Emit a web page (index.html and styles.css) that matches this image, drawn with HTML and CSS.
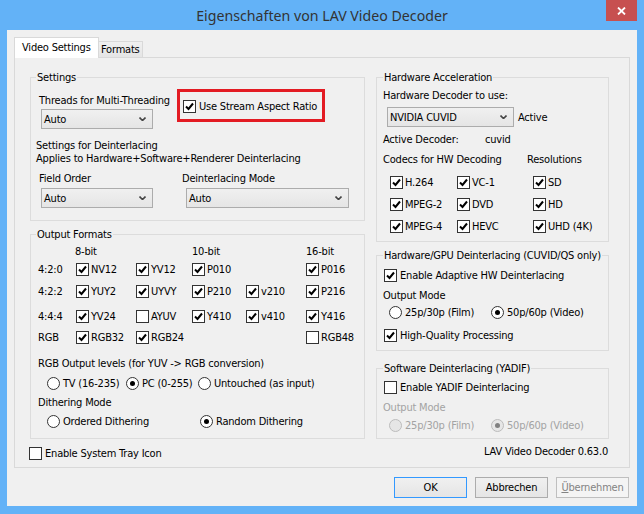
FILE: index.html
```html
<!DOCTYPE html>
<html lang="de">
<head>
    <meta charset="UTF-8">
    <title>Eigenschaften von LAV Video Decoder</title>
    <link rel="stylesheet" href="styles.css">
</head>
<body>
    <div class="window">
        <div class="titlebar">
            <div class="title">Eigenschaften von LAV Video Decoder</div>
            <div class="close">
                <svg width="9" height="8" viewBox="0 0 9 8"><path d="M1 0.5L8 7.5M8 0.5L1 7.5"/></svg>
            </div>
        </div>

        <div class="client">
            <div class="tabs">
                <div class="tab active">Video Settings</div>
                <div class="tab formats">Formats</div>
            </div>

            <div class="page">
                <!-- left column -->
                <div class="col left">
                    <fieldset class="settings">
                        <legend>Settings</legend>
                        <div class="row-a">
                            <div class="threads">
                                <div class="lbl">Threads for Multi-Threading</div>
                                <div class="combo w112"><span>Auto</span><svg class="arrow" viewBox="0 0 7 4"><path d="M0.5 0.5L3.5 3.5L6.5 0.5"/></svg></div>
                            </div>
                            <div class="aspect">
                                <span class="chk"><span class="box"><svg class="tick" viewBox="0 0 11 11"><path d="M2 5.5L4.5 8L9 2.5"/></svg></span>Use Stream Aspect Ratio</span>
                            </div>
                        </div>
                        <div class="deint-title">Settings for Deinterlacing<br>Applies to Hardware+Software+Renderer Deinterlacing</div>
                        <div class="row-c">
                            <div class="field-order">
                                <div class="lbl">Field Order</div>
                                <div class="combo w112"><span>Auto</span><svg class="arrow" viewBox="0 0 7 4"><path d="M0.5 0.5L3.5 3.5L6.5 0.5"/></svg></div>
                            </div>
                            <div class="deint-mode">
                                <div>Deinterlacing Mode</div>
                                <div class="combo w163"><span>Auto</span><svg class="arrow" viewBox="0 0 7 4"><path d="M0.5 0.5L3.5 3.5L6.5 0.5"/></svg></div>
                            </div>
                        </div>
                    </fieldset>

                    <fieldset class="output">
                        <legend>Output Formats</legend>
                        <div class="fmt-grid">
                            <span></span><span class="hdr">8-bit</span><span></span><span>10-bit</span><span></span><span>16-bit</span>

                            <span>4:2:0</span>
                            <span class="chk tight"><span class="box"><svg class="tick" viewBox="0 0 11 11"><path d="M2 5.5L4.5 8L9 2.5"/></svg></span>NV12</span>
                            <span class="chk tight"><span class="box"><svg class="tick" viewBox="0 0 11 11"><path d="M2 5.5L4.5 8L9 2.5"/></svg></span>YV12</span>
                            <span class="chk tight"><span class="box"><svg class="tick" viewBox="0 0 11 11"><path d="M2 5.5L4.5 8L9 2.5"/></svg></span>P010</span>
                            <span></span>
                            <span class="chk tight"><span class="box"><svg class="tick" viewBox="0 0 11 11"><path d="M2 5.5L4.5 8L9 2.5"/></svg></span>P016</span>

                            <span>4:2:2</span>
                            <span class="chk tight"><span class="box"><svg class="tick" viewBox="0 0 11 11"><path d="M2 5.5L4.5 8L9 2.5"/></svg></span>YUY2</span>
                            <span class="chk tight"><span class="box"><svg class="tick" viewBox="0 0 11 11"><path d="M2 5.5L4.5 8L9 2.5"/></svg></span>UYVY</span>
                            <span class="chk tight"><span class="box"><svg class="tick" viewBox="0 0 11 11"><path d="M2 5.5L4.5 8L9 2.5"/></svg></span>P210</span>
                            <span class="chk tight"><span class="box"><svg class="tick" viewBox="0 0 11 11"><path d="M2 5.5L4.5 8L9 2.5"/></svg></span>v210</span>
                            <span class="chk tight"><span class="box"><svg class="tick" viewBox="0 0 11 11"><path d="M2 5.5L4.5 8L9 2.5"/></svg></span>P216</span>

                            <span>4:4:4</span>
                            <span class="chk tight"><span class="box"><svg class="tick" viewBox="0 0 11 11"><path d="M2 5.5L4.5 8L9 2.5"/></svg></span>YV24</span>
                            <span class="chk tight"><span class="box"></span>AYUV</span>
                            <span class="chk tight"><span class="box"><svg class="tick" viewBox="0 0 11 11"><path d="M2 5.5L4.5 8L9 2.5"/></svg></span>Y410</span>
                            <span class="chk tight"><span class="box"><svg class="tick" viewBox="0 0 11 11"><path d="M2 5.5L4.5 8L9 2.5"/></svg></span>v410</span>
                            <span class="chk tight"><span class="box"><svg class="tick" viewBox="0 0 11 11"><path d="M2 5.5L4.5 8L9 2.5"/></svg></span>Y416</span>

                            <span>RGB</span>
                            <span class="chk tight"><span class="box"><svg class="tick" viewBox="0 0 11 11"><path d="M2 5.5L4.5 8L9 2.5"/></svg></span>RGB32</span>
                            <span class="chk tight"><span class="box"><svg class="tick" viewBox="0 0 11 11"><path d="M2 5.5L4.5 8L9 2.5"/></svg></span>RGB24</span>
                            <span></span>
                            <span></span>
                            <span class="chk tight"><span class="box"></span>RGB48</span>
                        </div>

                        <div class="levels-label">RGB Output levels (for YUV -&gt; RGB conversion)</div>
                        <div class="radios levels">
                            <span class="radio w79"><span class="dot"></span>TV (16-235)</span>
                            <span class="radio w72"><span class="dot on"></span>PC (0-255)</span>
                            <span class="radio"><span class="dot"></span>Untouched (as input)</span>
                        </div>
                        <div class="dither-label">Dithering Mode</div>
                        <div class="radios dither">
                            <span class="radio w153"><span class="dot"></span>Ordered Dithering</span>
                            <span class="radio"><span class="dot on"></span>Random Dithering</span>
                        </div>
                    </fieldset>

                    <div class="tray">
                        <span class="chk"><span class="box"></span>Enable System Tray Icon</span>
                    </div>
                </div>

                <!-- right column -->
                <div class="col right">
                    <fieldset class="hw">
                        <legend>Hardware Acceleration</legend>
                        <div class="hw-label">Hardware Decoder to use:</div>
                        <div class="combo-row">
                            <div class="combo w127"><span>NVIDIA CUVID</span><svg class="arrow" viewBox="0 0 7 4"><path d="M0.5 0.5L3.5 3.5L6.5 0.5"/></svg></div>
                            <span class="active-state">Active</span>
                        </div>
                        <div class="active-dec"><span>Active Decoder:</span>cuvid</div>
                        <div class="codecs-head"><span>Codecs for HW Decoding</span>Resolutions</div>
                        <div class="codec-grid">
                            <span class="chk tight"><span class="box"><svg class="tick" viewBox="0 0 11 11"><path d="M2 5.5L4.5 8L9 2.5"/></svg></span>H.264</span>
                            <span class="chk tight"><span class="box"><svg class="tick" viewBox="0 0 11 11"><path d="M2 5.5L4.5 8L9 2.5"/></svg></span>VC-1</span>
                            <span class="chk tight"><span class="box"><svg class="tick" viewBox="0 0 11 11"><path d="M2 5.5L4.5 8L9 2.5"/></svg></span>SD</span>
                            <span class="chk tight"><span class="box"><svg class="tick" viewBox="0 0 11 11"><path d="M2 5.5L4.5 8L9 2.5"/></svg></span>MPEG-2</span>
                            <span class="chk tight"><span class="box"><svg class="tick" viewBox="0 0 11 11"><path d="M2 5.5L4.5 8L9 2.5"/></svg></span>DVD</span>
                            <span class="chk tight"><span class="box"><svg class="tick" viewBox="0 0 11 11"><path d="M2 5.5L4.5 8L9 2.5"/></svg></span>HD</span>
                            <span class="chk tight"><span class="box"><svg class="tick" viewBox="0 0 11 11"><path d="M2 5.5L4.5 8L9 2.5"/></svg></span>MPEG-4</span>
                            <span class="chk tight"><span class="box"><svg class="tick" viewBox="0 0 11 11"><path d="M2 5.5L4.5 8L9 2.5"/></svg></span>HEVC</span>
                            <span class="chk tight"><span class="box"><svg class="tick" viewBox="0 0 11 11"><path d="M2 5.5L4.5 8L9 2.5"/></svg></span>UHD (4K)</span>
                        </div>
                    </fieldset>

                    <fieldset class="gpu">
                        <legend>Hardware/GPU Deinterlacing (CUVID/QS only)</legend>
                        <div class="opt first">
                            <span class="chk"><span class="box"><svg class="tick" viewBox="0 0 11 11"><path d="M2 5.5L4.5 8L9 2.5"/></svg></span>Enable Adaptive HW Deinterlacing</span>
                        </div>
                        <div class="mode-label">Output Mode</div>
                        <div class="radios mode">
                            <span class="radio w102"><span class="dot"></span>25p/30p (Film)</span>
                            <span class="radio"><span class="dot on"></span>50p/60p (Video)</span>
                        </div>
                        <div class="opt hq">
                            <span class="chk"><span class="box"><svg class="tick" viewBox="0 0 11 11"><path d="M2 5.5L4.5 8L9 2.5"/></svg></span>High-Quality Processing</span>
                        </div>
                    </fieldset>

                    <fieldset class="sw">
                        <legend>Software Deinterlacing (YADIF)</legend>
                        <div class="opt yadif">
                            <span class="chk"><span class="box"></span>Enable YADIF Deinterlacing</span>
                        </div>
                        <div class="mode-label disabled">Output Mode</div>
                        <div class="radios mode sw-mode disabled">
                            <span class="radio w102"><span class="dot"></span>25p/30p (Film)</span>
                            <span class="radio"><span class="dot on"></span>50p/60p (Video)</span>
                        </div>
                    </fieldset>

                    <div class="version">LAV Video Decoder 0.63.0</div>
                </div>
            </div>

            <div class="buttons">
                <button class="btn default">OK</button>
                <button class="btn">Abbrechen</button>
                <button class="btn" disabled><u>Ü</u>bernehmen</button>
            </div>
        </div>
    </div>
</body>
</html>
```

FILE: styles.css
```css
body {
    margin: 0;
    font-family: "DejaVu Sans Condensed", "DejaVu Sans", sans-serif;
    font-stretch: condensed;
    font-size: 11px;
    line-height: 13px;
    letter-spacing: -0.2px;
    color: #000;
}
.window {
    width: 644px;
    height: 514px;
    background: #63b2f7;
    display: flex;
    flex-direction: column;
}
.titlebar {
    height: 30px;
    display: grid;
    grid-template-columns: 1fr auto 1fr;
    align-items: start;
}
.title {
    grid-column: 2;
    font-family: "Noto Sans", sans-serif;
    font-stretch: normal;
    font-size: 14.2px;
    line-height: 31px;
    letter-spacing: 0;
    color: #333;
}
.close {
    grid-column: 3;
    justify-self: end;
    margin-right: 7px;
    width: 31px;
    height: 21px;
    background: #c75050;
    display: flex;
    align-items: center;
    justify-content: center;
}
.close path {
    stroke: #fff;
    stroke-width: 1.8;
    fill: none;
}
.client {
    height: 476px;
    margin: 0 7px;
    background: #f0f0f0;
    padding: 7px 7px 0;
    box-sizing: border-box;
}

/* tabs */
.tabs {
    display: flex;
    align-items: flex-end;
    height: 21px;
    margin-bottom: -1px;
    position: relative;
    z-index: 1;
}
.tab {
    box-sizing: border-box;
    border: 1px solid #d9d9d9;
    border-bottom: none;
}
.tab.active {
    width: 85px;
    height: 21px;
    background: #fff;
    padding: 3px 0 0 7px;
}
.tab.formats {
    width: 45px;
    height: 16px;
    margin-left: -1px;
    margin-bottom: 1px;
    padding: 1px 0 0 2px;
    background: linear-gradient(#f0f0f0, #e5e5e5);
}
.page {
    height: 411px;
    box-sizing: border-box;
    border: 1px solid #d9d9d9;
    background: #f0f0f0;
    display: flex;
    gap: 11px;
    padding: 13px 0 0 15px;
}
.col.left { width: 335px; }
.col.right { width: 233px; }

/* group boxes */
fieldset {
    margin: 0;
    min-width: 0;
    border: 1px solid #dcdcdc;
    padding: 0 0 0 5px;
}
legend {
    padding: 0 1px;
    line-height: 13px;
}

/* common controls */
.chk, .radio {
    display: flex;
    align-items: center;
    height: 13px;
    gap: 3px;
    white-space: nowrap;
}
.chk.tight { gap: 2px; }
.box {
    width: 13px;
    height: 13px;
    box-sizing: border-box;
    border: 1px solid #333;
    background: #fff;
    display: flex;
    flex: none;
}
.tick {
    width: 11px;
    height: 11px;
}
.tick path {
    fill: none;
    stroke: #000;
    stroke-width: 2;
}
.dot {
    width: 13px;
    height: 13px;
    flex: none;
    box-sizing: border-box;
    border: 1px solid #333;
    border-radius: 50%;
    background: #fff;
    display: flex;
    align-items: center;
    justify-content: center;
}
.dot.on::after {
    content: "";
    width: 5px;
    height: 5px;
    border-radius: 50%;
    background: #000;
}
.disabled { color: #a3a3a3; }
.disabled .dot {
    border-color: #bcbcbc;
    background: #e6e6e6;
}
.disabled .dot.on::after { background: #808080; }

.combo {
    height: 20px;
    box-sizing: border-box;
    border: 1px solid #acacac;
    background: linear-gradient(#f0f0f0, #e5e5e5);
    display: flex;
    align-items: center;
    justify-content: space-between;
    padding: 0 6px 0 2px;
}
.arrow {
    width: 7px;
    height: 4px;
}
.arrow path {
    fill: none;
    stroke: #444;
    stroke-width: 1.6;
}
.w112 { width: 112px; }
.w127 { width: 127px; }
.w163 { width: 163px; }
.w72 { width: 72px; }
.w79 { width: 79px; }
.w102 { width: 102px; }
.w153 { width: 153px; }

/* settings group */
.settings { padding-bottom: 12px; }
.row-a {
    display: flex;
    align-items: flex-start;
    margin-top: 5px;
}
.threads {
    width: 141px;
    padding-top: 5px;
}
.threads .lbl, .field-order .lbl { margin-left: 3px; }
.threads .combo { margin: 2px 0 0 5px; }
.aspect {
    width: 148px;
    height: 33px;
    box-sizing: border-box;
    border: 3px solid #e31b23;
    display: flex;
    align-items: center;
    padding: 2px 0 0 3px;
}
.deint-title { margin-top: 10px; }
.row-c {
    display: flex;
    margin-top: 7px;
}
.field-order { width: 146px; }
.field-order .combo { margin: 3px 0 0 5px; }
.deint-mode .combo { margin: 3px 0 0 4px; }

/* output formats */
.output {
    margin-top: 7px;
    padding: 0 0 10px 7px;
}
.output legend { margin-left: -2px; }
.fmt-grid {
    display: grid;
    grid-template-columns: 38px 60px 56px 54px 60px auto;
    grid-template-rows: 13px 23px 21px 29px 13px;
    align-items: center;
    margin-top: 4px;
}
.fmt-grid .hdr { margin-left: -1px; }
.levels-label { margin-top: 13px; }
.radios {
    display: flex;
    margin-top: 6px;
}
.radios.levels { margin-top: 7px; }
.radios.levels, .radios.dither { padding-left: 9px; }
.dither-label { margin-top: 6px; }
.tray {
    display: flex;
    margin: 8px 0 0 -1px;
}

/* right column */
.hw, .gpu, .sw { padding-left: 6px; }
.hw { padding-bottom: 4px; }
.hw-label { margin-top: 5px; }
.combo-row {
    display: flex;
    align-items: center;
    margin-top: 5px;
}
.combo-row .combo { margin-left: 4px; }
.active-state { margin-left: 4px; }
.active-dec {
    display: flex;
    margin-top: 6px;
}
.active-dec span { width: 102px; }
.codecs-head {
    display: flex;
    margin-top: 7px;
}
.codecs-head span { width: 144px; }
.codec-grid {
    display: grid;
    grid-template-columns: 67px 76px auto;
    grid-template-rows: 22px 23px 21px;
    align-items: center;
    margin-top: 5px;
    padding-left: 7px;
}
.gpu {
    margin-top: 7px;
    padding-bottom: 8px;
}
.opt {
    display: flex;
    margin-left: 1px;
}
.opt.first { margin-top: 7px; }
.mode-label { margin-top: 7px; }
.radios.mode {
    margin-top: 4px;
    padding-left: 6px;
}
.opt.hq { margin-top: 10px; }
.sw {
    margin-top: 11px;
    padding-bottom: 6px;
}
.opt.yadif { margin-top: 6px; }
.radios.sw-mode { margin-top: 5px; }
.version {
    margin-top: 6px;
    text-align: right;
    padding-right: 1px;
}

/* dialog buttons */
.buttons {
    display: flex;
    justify-content: flex-end;
    gap: 8px;
    margin: 9px 1px 0 0;
}
.btn {
    width: 73px;
    height: 21px;
    box-sizing: border-box;
    border: 1px solid #acacac;
    background: linear-gradient(#f0f0f0, #e5e5e5);
    font: inherit;
    letter-spacing: inherit;
    color: #000;
    padding: 0;
}
.btn.default { border-color: #3399ff; }
.btn:disabled {
    border-color: #bfbfbf;
    background: #f4f4f4;
    color: #838383;
}
```
